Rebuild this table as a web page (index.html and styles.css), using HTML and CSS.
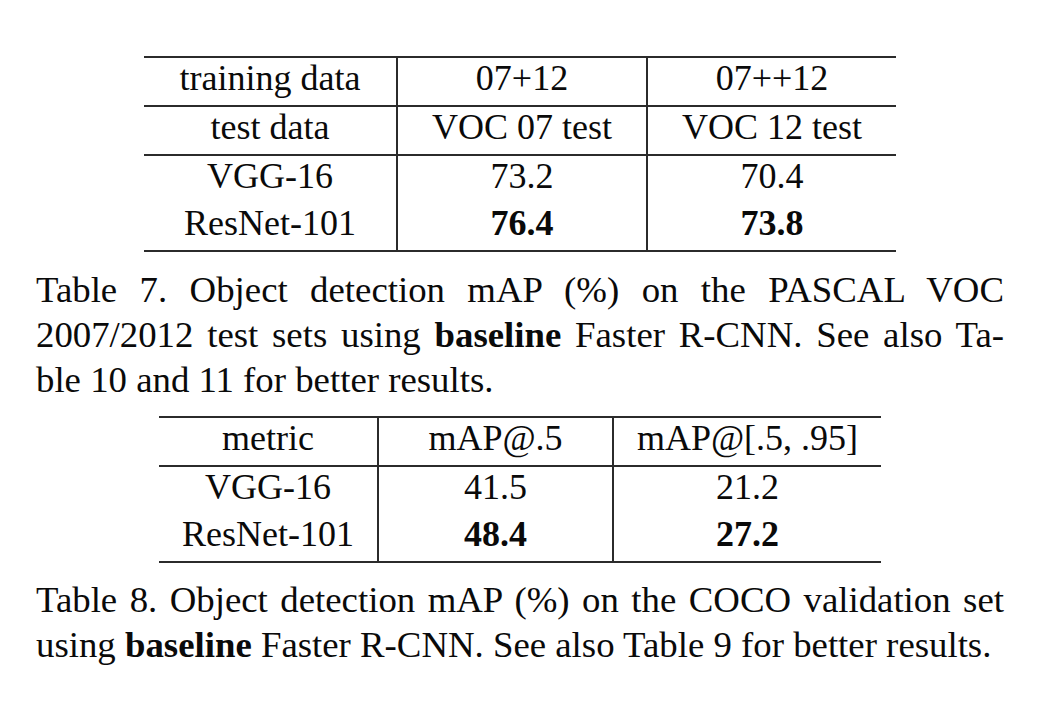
FILE: index.html
```html
<!DOCTYPE html>
<html>
<head>
<meta charset="utf-8">
<link rel="stylesheet" href="styles.css">
</head>
<body>
<div class="page">
  <table class="res t7">
    <colgroup><col class="c1"><col class="c2"><col class="c3"></colgroup>
    <tr class="hl"><td>training data</td><td>07+12</td><td>07++12</td></tr>
    <tr class="hl"><td>test data</td><td>VOC 07 test</td><td>VOC 12 test</td></tr>
    <tr><td>VGG-16</td><td>73.2</td><td>70.4</td></tr>
    <tr class="last"><td>ResNet-101</td><td><b>76.4</b></td><td><b>73.8</b></td></tr>
  </table>
  <p class="caption">
    <span class="ln just">Table 7. Object detection mAP (%) on the PASCAL VOC</span>
    <span class="ln just">2007/2012 test sets using <b>baseline</b> Faster R-CNN. See also Ta-</span>
    <span class="ln">ble 10 and 11 for better results.</span>
  </p>
  <table class="res t8">
    <colgroup><col class="d1"><col class="d2"><col class="d3"></colgroup>
    <tr class="hl"><td>metric</td><td>mAP@.5</td><td>mAP@[.5, .95]</td></tr>
    <tr><td>VGG-16</td><td>41.5</td><td>21.2</td></tr>
    <tr class="last"><td>ResNet-101</td><td><b>48.4</b></td><td><b>27.2</b></td></tr>
  </table>
  <p class="caption c8">
    <span class="ln just">Table 8. Object detection mAP (%) on the COCO validation set</span>
    <span class="ln">using <b>baseline</b> Faster R-CNN. See also Table 9 for better results.</span>
  </p>
</div>
</body>
</html>
```
FILE: styles.css
```css
html, body {
  margin: 0;
  padding: 0;
  background: #ffffff;
}
body {
  font-family: "Liberation Serif", "Times New Roman", serif;
  color: #0a0a0a;
}
.page {
  width: 968px;
  padding: 56px 0 0 36px;
}
.res {
  border-collapse: collapse;
  margin: 0 auto;
  table-layout: fixed;
  font-size: 36px;
  border-top: 2px solid #2b2b2b;
  border-bottom: 2px solid #2b2b2b;
}
.res td {
  text-align: center;
  padding: 0 0 7px 0;
  line-height: 40px;
  height: 40px;
  white-space: nowrap;
  border-left: 2px solid #2b2b2b;
}
.res td:first-child {
  border-left: none;
}
.res tr.hl td {
  border-bottom: 2px solid #2b2b2b;
}
.res b {
  font-weight: bold;
}
.t7 { width: 752px; }
.t7 .c1 { width: 253px; }
.t7 .c2 { width: 250px; }
.t7 .c3 { width: 249px; }
.t8 { width: 722px; margin-top: 14px; }
.t8 .d1 { width: 219px; }
.t8 .d2 { width: 235px; }
.t8 .d3 { width: 268px; }
.caption {
  margin: 15px 0 0 0;
  font-size: 36.8px;
  line-height: 45px;
}
.caption.c8 {
  margin-top: 14px;
}
.ln {
  display: block;
  text-align: left;
  white-space: nowrap;
}
.ln.just {
  text-align: justify;
  text-align-last: justify;
  white-space: normal;
}
```
